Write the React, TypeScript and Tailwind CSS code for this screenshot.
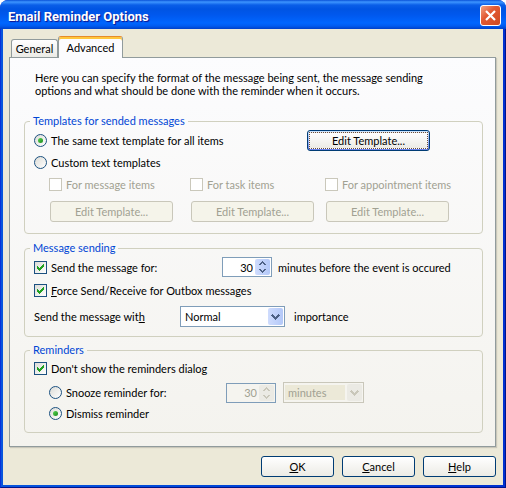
import type { ReactNode, SelectHTMLAttributes } from "react";
import { useState } from "react";

// ---------- form bits ----------

function Check(props: { id: string; checked?: boolean; disabled?: boolean; children: ReactNode }) {
  return (
    <div className="flex items-center gap-1">
      <span className="grid size-[13px] shrink-0">
        <input
          id={props.id}
          type="checkbox"
          defaultChecked={props.checked}
          disabled={props.disabled}
          className="peer col-start-1 row-start-1 size-[13px] appearance-none border border-[#1c5180] bg-linear-to-br from-[#dcdcd7] to-white disabled:border-[#cac8bb] disabled:bg-none disabled:bg-white"
        />
        <svg viewBox="0 0 13 13" shapeRendering="crispEdges" className="pointer-events-none invisible col-start-1 row-start-1 size-[13px] peer-checked:visible">
          <path d="M3 5h1v3h-1zM4 6h1v3h-1zM5 7h1v3h-1zM6 6h1v3h-1zM7 5h1v3h-1zM8 4h1v3h-1zM9 3h1v3h-1z" fill="#21a121" />
        </svg>
      </span>
      <label htmlFor={props.id} className={props.disabled ? "text-[#a1a192]" : ""}>
        {props.children}
      </label>
    </div>
  );
}

function Radio(props: { id: string; name: string; checked?: boolean; children: ReactNode }) {
  return (
    <div className="flex items-center gap-1">
      <span className="grid size-[13px] shrink-0 place-items-center">
        <input
          id={props.id}
          name={props.name}
          type="radio"
          defaultChecked={props.checked}
          className="peer col-start-1 row-start-1 size-[13px] appearance-none rounded-full border border-[#1c5180] bg-linear-to-br from-[#dcdcd7] to-white"
        />
        <span className="pointer-events-none invisible col-start-1 row-start-1 size-[5px] rounded-full bg-linear-to-br from-[#55d551] to-[#1c8a1c] peer-checked:visible" />
      </span>
      <label htmlFor={props.id}>{props.children}</label>
    </div>
  );
}

function Spinner({ label, disabled }: { label: string; disabled?: boolean }) {
  const [value, setValue] = useState(30);
  const btn = disabled
    ? "flex h-2 w-[15px] items-center justify-center bg-[#ebeae4] text-[#c9c7ba]"
    : "flex h-2 w-[15px] items-center justify-center bg-linear-to-r from-[#cfdcfd] to-[#b3c8f8] text-[#4d6185]";
  return (
    <div className={`flex h-5 w-[50px] shrink-0 items-center border border-[#7f9db9] pr-px ${disabled ? "bg-[#f5f4ef]" : "bg-white"}`}>
      <input
        aria-label={label}
        value={value}
        disabled={disabled}
        onChange={(e) => setValue(Number(e.target.value) || 0)}
        className="min-w-0 flex-1 bg-transparent pr-[2px] text-right outline-none disabled:text-[#a1a192]"
      />
      <div className="flex flex-col">
        <button type="button" aria-label="Increase" disabled={disabled} className={`rounded-t-xs ${btn}`} onClick={() => setValue(value + 1)}>
          <svg viewBox="0 0 7 4" className="h-1 w-[7px]" shapeRendering="crispEdges">
            <path d="M3 0h1v1h1v1h1v1h1v1h-2v-1h-1v-1h-1v1h-1v1h-2v-1h1v-1h1v-1h1z" fill="currentColor" />
          </svg>
        </button>
        <button type="button" aria-label="Decrease" disabled={disabled} className={`rounded-b-xs ${btn}`} onClick={() => setValue(value - 1)}>
          <svg viewBox="0 0 7 4" className="h-1 w-[7px] rotate-180" shapeRendering="crispEdges">
            <path d="M3 0h1v1h1v1h1v1h1v1h-2v-1h-1v-1h-1v1h-1v1h-2v-1h1v-1h1v-1h1z" fill="currentColor" />
          </svg>
        </button>
      </div>
    </div>
  );
}

function Select({ disabled, children, ...rest }: SelectHTMLAttributes<HTMLSelectElement>) {
  return (
    <div className={`grid h-[21px] w-full items-center border p-px ${disabled ? "border-[#c9c7ba] bg-[#f5f4ef]" : "border-[#7f9db9] bg-white"}`}>
      <select
        {...rest}
        disabled={disabled}
        className="col-start-1 row-start-1 h-[17px] w-full appearance-none pl-[3px] opacity-100 outline-none disabled:h-[15px] disabled:bg-[#ece9d8] disabled:text-[#a1a192]"
      >
        {children}
      </select>
      <span className={`pointer-events-none col-start-1 row-start-1 justify-self-end pl-[2px] ${disabled ? "bg-[#f5f4ef]" : "bg-white"}`}>
        <span
          className={`flex h-[17px] w-[15px] items-center justify-center rounded-xs ${
            disabled ? "bg-[#ebeae4] text-[#c9c7ba]" : "bg-linear-to-r from-[#cfdcfd] to-[#b3c8f8] text-[#4d6185]"
          }`}
        >
          <svg viewBox="0 0 9 6" className="h-[6px] w-[9px]" shapeRendering="crispEdges">
            <path d="M1 0h1v1h1v1h1v1h1v-1h1v-1h1v-1h1v1h1v1h-1v1h-1v1h-1v1h-1v1h-1v-1h-1v-1h-1v-1h-1v-1h-1v-1h1z" fill="currentColor" />
          </svg>
        </span>
      </span>
    </div>
  );
}

function EditButton({ disabled, focused }: { disabled?: boolean; focused?: boolean }) {
  if (focused) {
    return (
      <button type="button" className="h-[21px] w-[123px] rounded-[3px] border border-[#003c74] bg-linear-to-b from-[#cee7ff] to-[#6982ee] p-px">
        <span className="flex h-[17px] items-center justify-center border border-dotted border-[#6b4d3c] bg-linear-to-b from-white to-[#ecebe5] bg-clip-border">
          Edit Template...
        </span>
      </button>
    );
  }
  return (
    <button
      type="button"
      disabled={disabled}
      className="h-[21px] w-[123px] rounded-[3px] border border-[#c9c7ba] bg-[#f5f4ea] text-[#a1a192]"
    >
      Edit Template...
    </button>
  );
}

function Group({ title, children, className }: { title: string; children: ReactNode; className?: string }) {
  return (
    <fieldset className={`rounded-[4px] border border-[#d0d0bf] px-[9px] ${className ?? ""}`}>
      <legend className="-ml-1 h-[14px] px-[3px] leading-[14px] text-[#0046d5]">{title}</legend>
      {children}
    </fieldset>
  );
}

const TEMPLATE_ITEMS = [
  { id: "tpl-message", label: "For message items" },
  { id: "tpl-task", label: "For task items" },
  { id: "tpl-appointment", label: "For appointment items" },
];

const FOOTER_BUTTONS = [
  { hot: "O", rest: "K" },
  { hot: "C", rest: "ancel" },
  { hot: "H", rest: "elp" },
];

export default function App() {
  return (
    <div className="flex min-h-screen flex-col bg-white font-['Lato',sans-serif] text-[11px] leading-[13px] text-black">
      <div className="flex flex-1 flex-col rounded-t-lg bg-[#0831d9]">
        {/* Title bar */}
        <header className="flex h-[29px] items-center justify-between rounded-t-lg bg-[linear-gradient(to_bottom,#0a52d8_0,#3d95ff_2px,#0a5ee8_5px,#0054e3_9px,#0058ee_15px,#0066ff_23px,#005bf0_26px,#0040c8_29px)] pr-[5px] pl-2">
          <h1 className="pt-1 font-['Roboto',sans-serif] text-[13px] font-bold text-white [text-shadow:1px_1px_1px_#0f1089]">Email Reminder Options</h1>
          <button type="button" aria-label="Close" className="mt-px flex size-[21px] items-center justify-center rounded-[3px] border border-white bg-linear-to-br from-[#f0a080] via-[#e25a33] via-40% to-[#d04a20]">
            <svg viewBox="0 0 13 13" className="size-[13px]">
              <path d="M2 2l9 9M11 2l-9 9" stroke="#fff" strokeWidth="2.2" />
            </svg>
          </button>
        </header>

        <div className="flex flex-1 flex-col border-r border-b border-l border-r-[#00138c] border-b-[#00138c] border-l-[#0831d9] bg-linear-to-r from-[#0855dd] to-[#0030d0]">
          <main className="mx-[2px] mb-[2px] flex flex-1 flex-col bg-[#ece9d8] pt-[7px] pr-[7px] pl-[6px]">
            {/* Tabs */}
            <div role="tablist" className="flex items-end pl-[2px]">
              <button type="button" role="tab" aria-selected="false" className="h-[18px] w-[47px] rounded-t-[3px] border border-b-0 border-[#919b9c] bg-linear-to-b from-white to-[#ecebe6]">
                General
              </button>
              <button
                type="button"
                role="tab"
                aria-selected="true"
                className="z-10 -mb-px h-[22px] w-[65px] rounded-t-[3px] border-x border-t border-x-[#919b9c] border-t-[#e68b2c] bg-[#fcfcfe] pb-px shadow-[inset_0_2px_0_#ffc73c]"
              >
                Advanced
              </button>
            </div>

            <section className="border border-[#919b9c] bg-linear-to-b from-[#fcfcfe] to-[#f4f3ee] pr-[12px] pb-[13px] pl-[14px] shadow-[1px_1px_1px_#c9c7ba]">
              <p className="max-w-[400px] pt-[13px] pl-[11px]">
                Here you can specify the format of the message being sent, the message sending options and what should be done with the reminder when it occurs.
              </p>

              <Group title="Templates for sended messages" className="mt-[17px] pb-[11px]">
                <div className="flex items-center justify-between pt-[2px] pr-[43px]">
                  <Radio id="same" name="template" checked>
                    The same text template for all items
                  </Radio>
                  <EditButton focused />
                </div>
                <div className="mt-1 flex h-[15px] items-center">
                  <Radio id="custom" name="template">
                    Custom text templates
                  </Radio>
                </div>
                <div className="mt-[7px] grid grid-cols-[141px_135px_1fr] pl-[15px]">
                  {TEMPLATE_ITEMS.map((t) => (
                    <div key={t.id}>
                      <div className="flex h-[15px] items-center">
                        <Check id={t.id} disabled>
                          {t.label}
                        </Check>
                      </div>
                      <div className="mt-[9px] pl-px">
                        <EditButton disabled />
                      </div>
                    </div>
                  ))}
                </div>
              </Group>

              <Group title="Message sending" className="mt-[7px] pb-[9px]">
                <div className="flex items-center pt-[2px]">
                  <div className="w-[188px]">
                    <Check id="send" checked>
                      Send the message for:
                    </Check>
                  </div>
                  <Spinner label="Minutes before the event" />
                  <span className="pl-[6px]">minutes before the event is occured</span>
                </div>
                <div className="mt-[6px] flex h-[15px] items-center">
                  <Check id="force" checked>
                    <u>F</u>orce Send/Receive for Outbox messages
                  </Check>
                </div>
                <div className="mt-2 flex items-center">
                  <label htmlFor="importance" className="w-[146px]">
                    Send the message wit<u>h</u>
                  </label>
                  <div className="w-[105px]">
                    <Select id="importance">
                      <option>Normal</option>
                      <option>High</option>
                      <option>Low</option>
                    </Select>
                  </div>
                  <span className="pl-[9px]">importance</span>
                </div>
              </Group>

              <Group title="Reminders" className="mt-[6px] pb-[11px]">
                <div className="flex h-[15px] items-center pt-[8px]">
                  <Check id="dialog" checked>
                    Don't show the reminders dialog
                  </Check>
                </div>
                <div className="mt-[10px] flex items-center pl-[15px]">
                  <div className="w-[177px]">
                    <Radio id="snooze" name="action">
                      Snooze reminder for:
                    </Radio>
                  </div>
                  <Spinner label="Snooze time" disabled />
                  <div className="ml-[7px] w-[81px]">
                    <Select aria-label="Snooze unit" disabled>
                      <option>minutes</option>
                    </Select>
                  </div>
                </div>
                <div className="mt-[3px] flex h-[15px] items-center pl-[15px]">
                  <Radio id="dismiss" name="action" checked>
                    Dismiss reminder
                  </Radio>
                </div>
              </Group>
            </section>

            <footer className="flex justify-end gap-2 pt-[9px] pb-[6px]">
              {FOOTER_BUTTONS.map((b) => (
                <button key={b.rest} type="button" className="h-[21px] w-[73px] rounded-[3px] border border-[#003c74] bg-linear-to-b from-white to-[#ecebe5]">
                  <u>{b.hot}</u>
                  {b.rest}
                </button>
              ))}
            </footer>
          </main>
        </div>
      </div>
    </div>
  );
}
